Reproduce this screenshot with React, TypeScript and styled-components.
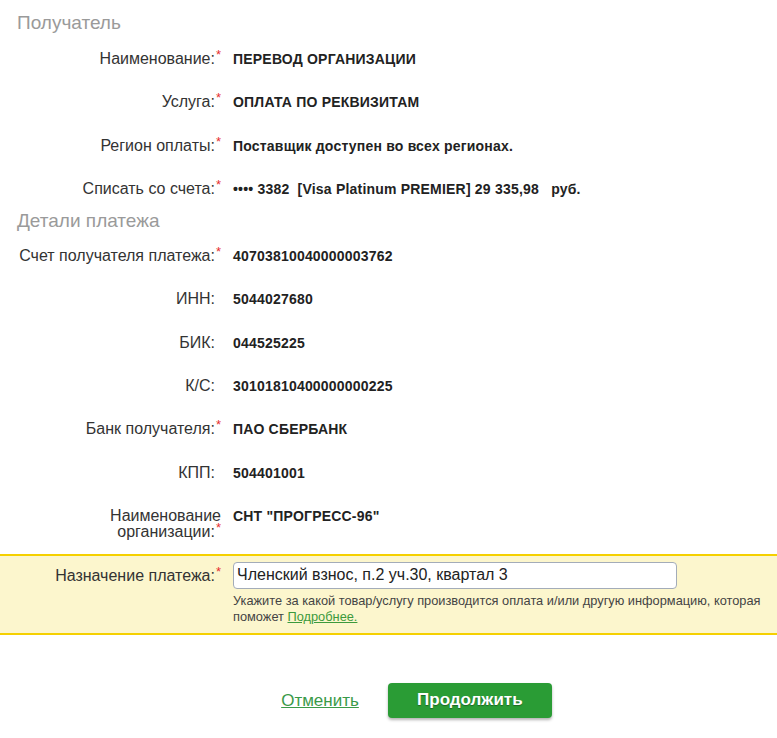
import styled, { createGlobalStyle } from 'styled-components';

const GlobalStyle = createGlobalStyle`
	body {
		margin: 0;
		background: #fff;
		font-family: 'Liberation Sans', Arial, sans-serif;
		color: #333;
	}
`;

type Field = { label: string; value: string; required?: boolean };

const recipient: Field[] = [
	{ label: 'Наименование:', value: 'ПЕРЕВОД ОРГАНИЗАЦИИ', required: true },
	{ label: 'Услуга:', value: 'ОПЛАТА ПО РЕКВИЗИТАМ', required: true },
	{ label: 'Регион оплаты:', value: 'Поставщик доступен во всех регионах.', required: true },
	{ label: 'Списать со счета:', value: '•••• 3382\u00a0\u00a0[Visa Platinum PREMIER] 29 335,98\u00a0\u00a0\u00a0руб.', required: true },
];

const details: Field[] = [
	{ label: 'Счет получателя платежа:', value: '40703810040000003762', required: true },
	{ label: 'ИНН:', value: '5044027680' },
	{ label: 'БИК:', value: '044525225' },
	{ label: 'К/С:', value: '30101810400000000225' },
	{ label: 'Банк получателя:', value: 'ПАО СБЕРБАНК', required: true },
	{ label: 'КПП:', value: '504401001' },
];

const App = () => {
	return (
		<>
			<GlobalStyle />
			<Page>
				<SectionTitle>Получатель</SectionTitle>
				{recipient.map((f) => (
					<Row key={f.label}>
						<Label>
							{f.label}
							<Star $visible={!!f.required}>*</Star>
						</Label>
						<Value>{f.value}</Value>
					</Row>
				))}
				<SectionTitle $second>Детали платежа</SectionTitle>
				{details.map((f) => (
					<Row key={f.label}>
						<Label>
							{f.label}
							<Star $visible={!!f.required}>*</Star>
						</Label>
						<Value>{f.value}</Value>
					</Row>
				))}
				<Row $tall>
					<Label>
						Наименование
						<br />
						организации:
						<Star $visible>*</Star>
					</Label>
					<Value>СНТ "ПРОГРЕСС-96"</Value>
				</Row>
				<Highlight>
					<Label>
						Назначение платежа:
						<Star $visible>*</Star>
					</Label>
					<InputCol>
						<TextInput defaultValue="Членский взнос, п.2 уч.30, квартал 3" />
						<Hint>
							Укажите за какой товар/услугу производится оплата и/или другую информацию, которая
							поможет <HintLink href="#">Подробнее.</HintLink>
						</Hint>
					</InputCol>
				</Highlight>
				<Actions>
					<CancelLink href="#">Отменить</CancelLink>
					<PrimaryButton type="button">Продолжить</PrimaryButton>
				</Actions>
			</Page>
		</>
	);
};

const Page = styled.div`
	width: 777px;
	height: 738px;
	overflow: hidden;
	display: flex;
	flex-direction: column;
`;

const SectionTitle = styled.h2<{ $second?: boolean }>`
	margin: 0;
	padding: ${({ $second }) => ($second ? '0 0 0 17px' : '12px 0 0 17px')};
	height: ${({ $second }) => ($second ? '24px' : '25px')};
	font-size: 19px;
	font-weight: normal;
	color: #9a9a9a;
	line-height: 22px;
`;

const Row = styled.div<{ $tall?: boolean }>`
	display: grid;
	grid-template-columns: 221px 1fr;
	column-gap: 12px;
	align-items: start;
	padding-top: 14px;
	height: ${({ $tall }) => ($tall ? '46px' : '29.3px')};
`;

const Label = styled.div`
	text-align: right;
	font-size: 16px;
	line-height: 16px;
	color: #333;
	white-space: nowrap;
`;

const Star = styled.span<{ $visible: boolean }>`
	color: #e62e2e;
	font-size: 13px;
	position: relative;
	top: -5px;
	margin-left: 1px;
	visibility: ${({ $visible }) => ($visible ? 'visible' : 'hidden')};
`;

const Value = styled.div`
	font-size: 14px;
	font-weight: bold;
	letter-spacing: 0.2px;
	color: #222;
	line-height: 16px;
	white-space: nowrap;
`;

const Highlight = styled.div`
	display: grid;
	grid-template-columns: 221px 1fr;
	column-gap: 12px;
	background: #fcf6cd;
	border-top: 2px solid #f5d000;
	border-bottom: 2px solid #f5d000;
	padding: 6px 0 8px;
	${Label} {
		padding-top: 6px;
	}
`;

const InputCol = styled.div`
	display: flex;
	flex-direction: column;
	gap: 4px;
`;

const TextInput = styled.input`
	box-sizing: border-box;
	width: 444px;
	height: 27px;
	border: 1px solid #a3acb9;
	border-radius: 4px;
	padding: 0 3px;
	font-family: 'Liberation Sans', Arial, sans-serif;
	font-size: 16px;
	color: #222;
	background: #fff;
	outline: none;
`;

const Hint = styled.div`
	font-size: 12.8px;
	line-height: 16px;
	color: #444;
	padding-right: 10px;
`;

const HintLink = styled.a`
	color: #3c9a3c;
	text-decoration: underline;
`;

const Actions = styled.div`
	display: flex;
	align-items: center;
	justify-content: center;
	gap: 29px;
	padding-top: 48px;
	padding-left: 56px;
`;

const CancelLink = styled.a`
	color: #3a9a48;
	font-size: 17px;
	text-decoration: underline;
	margin-top: 2px;
`;

const PrimaryButton = styled.button`
	width: 164px;
	height: 35px;
	border: none;
	border-radius: 4px;
	background: #2a9c35;
	color: #fff;
	font-family: 'Liberation Sans', Arial, sans-serif;
	font-size: 17px;
	font-weight: bold;
	text-shadow: 0 1px 1px rgba(0, 0, 0, 0.35);
	box-shadow: 0 2px 3px rgba(0, 0, 0, 0.3);
	cursor: pointer;
`;

export default App;
